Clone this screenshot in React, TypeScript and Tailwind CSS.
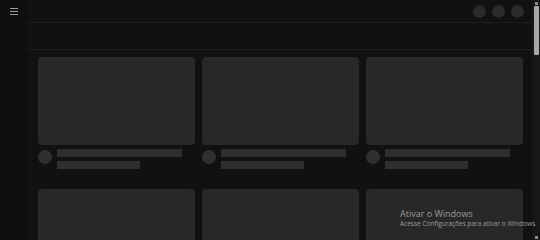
import React from "react";

function Item() {
  return (
    <div className="flex flex-col">
      <div className="h-[88px] rounded-[4px] bg-[#282828]" />
      <div className="flex mt-[4px] gap-[5px]">
        <div className="w-[14px] h-[14px] mt-[1px] rounded-full bg-[#2f2f2f] shrink-0" />
        <div className="flex flex-col gap-[4px]">
          <div className="w-[125px] h-[8px] bg-[#2e2e2e]" />
          <div className="w-[83px] h-[8px] bg-[#2e2e2e]" />
        </div>
      </div>
    </div>
  );
}

export default function App() {
  return (
    <div
      className="w-[540px] h-[240px] overflow-hidden flex bg-[#111111] relative"
      style={{ fontFamily: '"Segoe UI", "Open Sans", "Liberation Sans", sans-serif' }}
    >
      <div className="w-[28px] shrink-0 bg-[#0f0f0f] flex flex-col items-start">
        <div className="mt-[8px] ml-[10px] flex flex-col gap-[2px]">
          <div className="w-[8px] h-[1px] bg-[#9a9a9a]" />
          <div className="w-[8px] h-[1px] bg-[#9a9a9a]" />
          <div className="w-[8px] h-[1px] bg-[#9a9a9a]" />
        </div>
      </div>
      <div className="flex-1 flex flex-col min-w-0">
        <div className="h-[23px] border-b border-[#1e1e1e] flex items-center justify-end pr-[8px] gap-[6px] shrink-0">
          <div className="w-[13px] h-[13px] rounded-full bg-[#2a2a2a]" />
          <div className="w-[13px] h-[13px] rounded-full bg-[#2a2a2a]" />
          <div className="w-[13px] h-[13px] rounded-full bg-[#2a2a2a]" />
        </div>
        <div className="h-[27px] border-b border-[#1e1e1e] shrink-0" />
        <div className="pt-[7px] pl-[10px] pr-[9px] grid grid-cols-3 gap-x-[7px] gap-y-[20px]">
          <Item />
          <Item />
          <Item />
          <Item />
          <Item />
          <Item />
        </div>
      </div>
      <div className="w-[8px] shrink-0 bg-[#171717] flex flex-col items-center">
        <div className="h-[6px] w-full flex items-center justify-center">
          <div className="w-[3px] h-[3px] bg-[#8a8a8a]" />
        </div>
        <div className="w-[5px] h-[49px] bg-[#a8a8a8] rounded-[1px]" />
        <div className="flex-1" />
        <div className="h-[6px] w-full flex items-center justify-center">
          <div className="w-[3px] h-[3px] bg-[#8a8a8a]" />
        </div>
      </div>
      <div className="absolute left-[400px] top-[209px] text-[#9b9b9b] leading-none">
        <div className="text-[9px]">Ativar o Windows</div>
        <div className="text-[6.5px] mt-[3px] whitespace-nowrap">Acesse Configurações para ativar o Windows.</div>
      </div>
    </div>
  );
}
